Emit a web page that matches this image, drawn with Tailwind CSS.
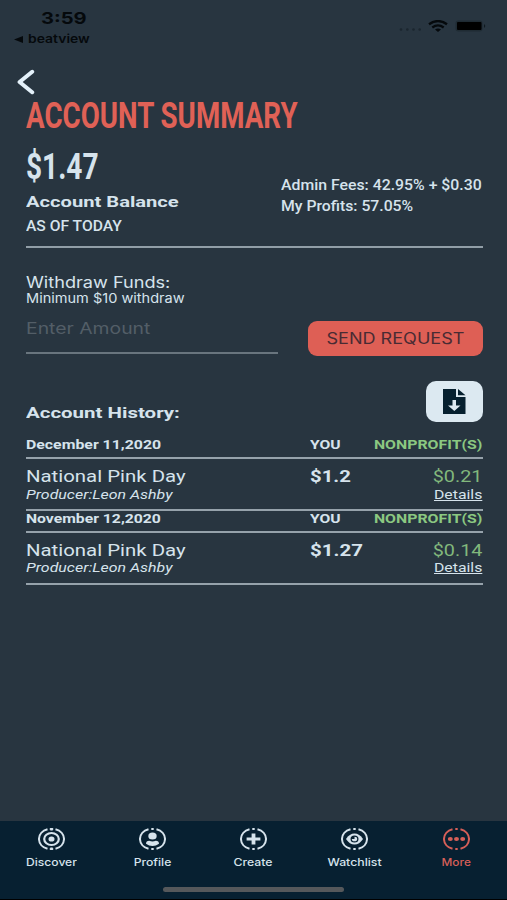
<!DOCTYPE html>
<html lang="en">
<head>
<meta charset="utf-8">
<title>Account Summary</title>
<script src="https://cdn.jsdelivr.net/npm/@tailwindcss/browser@4"></script>
</head>
<body class="flex h-[900px] w-[507px] flex-col overflow-hidden bg-[#283540] font-['Roboto',sans-serif] text-[#d6e3ec] whitespace-nowrap">

<!-- Status bar -->
<header class="flex h-12 shrink-0 justify-between pt-[9px] font-['Inter',sans-serif] text-[#05090c]">
  <div>
    <div class="h-5 pl-[41px] text-[16.5px] leading-[19px] font-bold"><span class="inline-block origin-left scale-x-[1.22]">3:59</span></div>
    <div class="flex h-5 items-center pl-[14px] text-[11.5px] leading-5 font-semibold">
      <svg class="mr-[5px] h-[7px] w-[9px]" viewBox="0 0 9 7"><path d="M0 3.5 9 0v7z" fill="currentColor"/></svg>
      <span class="inline-block origin-left scale-x-[1.21]">beatview</span>
    </div>
  </div>
  <div class="flex h-[34px] items-center pr-[20px]">
    <svg class="mt-[7px] mr-[6px] h-[3px] w-[23px]" viewBox="0 0 23 3" fill="#1b262e"><circle cx="2" cy="1.5" r="1.3"/><circle cx="8.3" cy="1.5" r="1.3"/><circle cx="14.5" cy="1.5" r="1.3"/><circle cx="20.7" cy="1.5" r="1.3"/></svg>
    <svg class="h-[12px] w-[20px]" viewBox="0 0 20 12" fill="none" stroke="currentColor" stroke-width="2.4"><path d="M1 4.3Q10-2.1 19 4.3M4.3 7.4q5.7-4 11.4 0"/><path d="M7 9.4q3-2 6 0L10 12z" fill="currentColor" stroke="none"/></svg>
    <svg class="ml-[7px] h-[12px] w-[32px]" viewBox="0 0 32 12"><rect x=".5" y=".5" width="27" height="11" rx="3" fill="#1f2b33"/><rect x="2" y="2" width="24.500" height="8" rx="1" fill="#000"/><path d="M29 4q2.500 2 0 4z" fill="#101a20"/></svg>
  </div>
</header>

<main class="flex grow flex-col pr-[24.5px] pl-[25.5px]">
  <div class="h-[48px] pt-[21px]">
    <svg class="-ml-[10px] h-[26px] w-[20px]" viewBox="0 0 20 26" fill="none" stroke="#e4f1fa" stroke-width="4" stroke-linecap="round" stroke-linejoin="round"><path d="M16.200 2.800 3.600 13l12.600 10.200"/></svg>
  </div>
  <h1 class="h-[51px] text-[36px] leading-10 font-bold text-[#e06156]"><span class="inline-block origin-left scale-x-[0.77]">ACCOUNT SUMMARY</span></h1>

  <!-- Balance -->
  <section class="flex h-[101px] justify-between border-b-2 border-[#919ea7]">
    <div>
      <div class="h-[45px] text-[36px] leading-10 font-bold"><span class="inline-block origin-left scale-x-[0.78]">$1.47</span></div>
      <div class="h-6 text-[15.5px] leading-5 font-bold"><span class="inline-block origin-left scale-x-[1.3]">Account Balance</span></div>
      <div class="text-[14px] leading-5 font-medium"><span class="inline-block origin-left scale-x-[1.116]">AS OF TODAY</span></div>
    </div>
    <div class="w-[202px] pt-[28px] text-[14px] leading-[21px] font-medium">
      <div><span class="inline-block origin-left scale-x-[1.13]">Admin Fees: 42.95% + $0.30</span></div>
      <div><span class="inline-block origin-left scale-x-[1.125]">My Profits: 57.05%</span></div>
    </div>
  </section>

  <!-- Withdraw -->
  <section class="flex h-[133px] justify-between pt-[26px] font-['Inter',sans-serif]">
    <div class="w-[252px]">
      <div class="h-[17px] text-[15.3px] leading-[17px]"><span class="inline-block origin-left scale-x-[1.185]">Withdraw Funds:</span></div>
      <div class="h-[14px] text-[13px] leading-[14px]"><span class="inline-block origin-left scale-x-[1.118]">Minimum $10 withdraw</span></div>
      <div class="mt-[14px] h-[35px] border-b-2 border-[#69757e] text-[16px] leading-[19px] text-[#535e67]"><span class="inline-block origin-left scale-x-[1.21]">Enter Amount</span></div>
    </div>
    <button class="mt-[47px] flex h-[35px] w-[175px] items-center justify-center rounded-[9px] bg-[#de5f55] pt-[2px] text-[15.3px] text-[#492b33]"><span class="inline-block scale-x-[1.18]">SEND REQUEST</span></button>
  </section>

  <!-- History -->
  <div class="flex h-[55px] justify-between">
    <h2 class="pt-[22px] text-[15.5px] leading-5 font-bold"><span class="inline-block origin-left scale-x-[1.32]">Account History:</span></h2>
    <button class="flex h-[41px] w-[57px] items-center justify-center rounded-[10px] bg-[#dce9f1]">
      <svg class="h-[25px] w-[23px]" viewBox="0 0 23 25"><path d="M0 0h13v8h9.500v17H0z" fill="#06202f"/><path d="M15 0v6.200h7.500z" fill="#06202f"/><path d="M9.500 11h3.500v5.500h4.500L11.300 22 5 16.500h4.500z" fill="#dce9f1"/></svg>
    </button>
  </div>
  <section>
    <div class="grid h-[23px] grid-cols-[284px_1fr_auto] border-b-2 border-[#96a2ab] text-[13.5px] leading-4 font-bold">
      <div><span class="inline-block origin-left scale-x-[1.174]">December 11,2020</span></div>
      <div><span class="inline-block origin-left scale-x-[1.16]">YOU</span></div>
      <div class="text-[#8bc881]"><span class="inline-block origin-right scale-x-[1.174]">NONPROFIT(S)</span></div>
    </div>
    <div class="grid h-[52px] grid-cols-[284.500px_1fr_auto] border-b-2 border-[#96a2ab] pt-[9px] text-[16.5px] leading-[18px]">
      <div>
        <div class="h-[19px]"><span class="inline-block origin-left scale-x-[1.235]">National Pink Day</span></div>
        <div class="text-[13.5px] leading-[14px] italic"><span class="inline-block origin-left scale-x-[1.18]">Producer:Leon Ashby</span></div>
      </div>
      <div class="font-bold"><span class="inline-block origin-left scale-x-[1.23]">$1.2</span></div>
      <div class="text-right">
        <div class="h-[19px] text-[#82b87c]"><span class="inline-block origin-right scale-x-[1.2]">$0.21</span></div>
        <div class="text-[13.5px] leading-[14px]"><a class="inline-block origin-right scale-x-[1.17] underline">Details</a></div>
      </div>
    </div>
    <div class="grid h-[22px] grid-cols-[284px_1fr_auto] border-b-2 border-[#96a2ab] text-[13.5px] leading-4 font-bold">
      <div class="-mt-px"><span class="inline-block origin-left scale-x-[1.165]">November 12,2020</span></div>
      <div class="-mt-px"><span class="inline-block origin-left scale-x-[1.16]">YOU</span></div>
      <div class="-mt-px text-[#8bc881]"><span class="inline-block origin-right scale-x-[1.174]">NONPROFIT(S)</span></div>
    </div>
    <div class="grid h-[52px] grid-cols-[284.500px_1fr_auto] border-b-2 border-[#96a2ab] pt-[9px] text-[16.5px] leading-[18px]">
      <div>
        <div class="h-[18px]"><span class="inline-block origin-left scale-x-[1.235]">National Pink Day</span></div>
        <div class="text-[13.5px] leading-[14px] italic"><span class="inline-block origin-left scale-x-[1.18]">Producer:Leon Ashby</span></div>
      </div>
      <div class="font-bold"><span class="inline-block origin-left scale-x-[1.24]">$1.27</span></div>
      <div class="text-right">
        <div class="h-[18px] text-[#82b87c]"><span class="inline-block origin-right scale-x-[1.2]">$0.14</span></div>
        <div class="text-[13.5px] leading-[14px]"><a class="inline-block origin-right scale-x-[1.17] underline">Details</a></div>
      </div>
    </div>
  </section>
</main>

<!-- Tab bar -->
<svg class="hidden"><symbol id="ring" viewBox="0 0 27 22"><path d="M9.500 1.200A12.300 10.300 0 0 0 9.500 20.800M17.500 1.200A12.300 10.300 0 0 1 17.500 20.800" fill="none" stroke="currentColor" stroke-width="2"/><path d="M12.300 0h2.400v2h-2.400zM12.300 20h2.400v2h-2.400z" fill="currentColor"/></symbol></svg>
<nav class="flex h-[79px] shrink-0 flex-col items-center border-b border-black bg-[#072031] font-['Inter',sans-serif] text-[10.7px] leading-4 font-medium">
  <div class="grid h-[66px] w-[507px] grid-cols-5 text-center">
    <div class="flex flex-col items-center pt-[7px] pl-px">
      <svg class="h-[22px] w-[27px]" viewBox="0 0 27 22" fill="none" stroke="currentColor"><use href="#ring" width="27" height="22"/><ellipse cx="13.500" cy="11" rx="7.300" ry="6" stroke-width="2.200"/><ellipse cx="13.500" cy="11" rx="3" ry="2.600" fill="currentColor" stroke="none"/></svg>
      <span class="mt-[5px] scale-x-[1.13]">Discover</span>
    </div>
    <div class="flex flex-col items-center pt-[7px] pl-px">
      <svg class="h-[22px] w-[27px]" viewBox="0 0 27 22" fill="currentColor"><use href="#ring" width="27" height="22"/><ellipse cx="13.500" cy="8" rx="4.200" ry="3.600"/><path d="M7 15.800q0-3 3.200-3 3.300 1.300 6.600 0 3.200 0 3.200 3-3 2.200-6.500 2.200T7 15.800z"/></svg>
      <span class="mt-[5px] scale-x-[1.14]">Profile</span>
    </div>
    <div class="flex flex-col items-center pt-[7px]">
      <svg class="h-[22px] w-[27px]" viewBox="0 0 27 22" fill="currentColor"><use href="#ring" width="27" height="22"/><path d="M11.600 5.500h3.800v4h5v3h-5v4h-3.800v-4h-5v-3h5z"/></svg>
      <span class="mt-[5px] scale-x-[1.15]">Create</span>
    </div>
    <div class="flex flex-col items-center pt-[7px]">
      <svg class="h-[22px] w-[27px]" viewBox="0 0 27 22" fill="currentColor"><use href="#ring" width="27" height="22"/><path d="M5 11q3.500-5.500 8.500-5.500t8.500 5.500q-3.500 5.500-8.500 5.500T5 11z"/><ellipse cx="13.500" cy="11" rx="4" ry="3.500" fill="#072031"/><path d="M13.500 8.700v2.300h-2.700a2.700 2.300 0 1 0 2.700-2.300z"/></svg>
      <span class="mt-[5px] scale-x-[1.15]">Watchlist</span>
    </div>
    <div class="flex flex-col items-center pt-[7px] text-[#d65f58]">
      <svg class="h-[22px] w-[27px]" viewBox="0 0 27 22" fill="currentColor"><use href="#ring" width="27" height="22"/><ellipse cx="7.300" cy="11" rx="2.500" ry="2.100"/><ellipse cx="13.500" cy="11" rx="2.500" ry="2.100"/><ellipse cx="19.700" cy="11" rx="2.500" ry="2.100"/></svg>
      <span class="mt-[5px] scale-x-[1.11]">More</span>
    </div>
  </div>
  <div class="h-[5px] w-[181px] rounded-full bg-[#55585b]"></div>
</nav>
</body>
</html>
